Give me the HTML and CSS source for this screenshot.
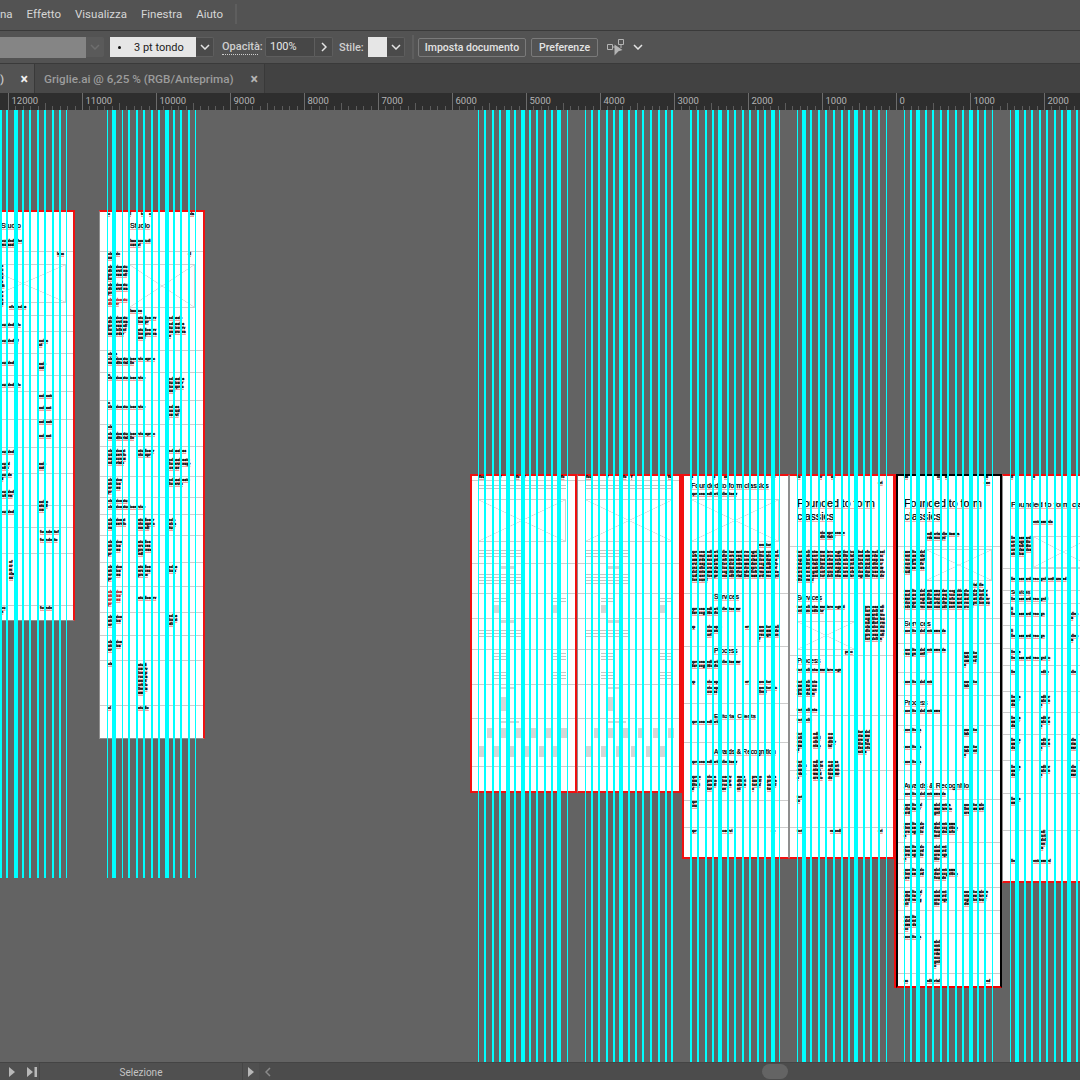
FILE: index.html
```html
<!DOCTYPE html>
<html lang="it">
<head>
    <meta charset="UTF-8">
    <title>Griglie.ai @ 6,25 %</title>
    <link rel="stylesheet" href="styles.css">
</head>
<body>
<div class="menubar">
    <span class="menu-item cut">na</span>
    <span class="menu-item">Effetto</span>
    <span class="menu-item">Visualizza</span>
    <span class="menu-item">Finestra</span>
    <span class="menu-item">Aiuto</span>
    <span class="menu-sep"></span>
</div>
<div class="controlbar">
    <div class="swatch-off"></div>
    <div class="chev-box dim"><svg width="10" height="6" viewBox="0 0 10 6"><path d="M1 1l4 4 4-4" fill="none" stroke="#6e6e6e" stroke-width="1.5"/></svg></div>
    <div class="stroke-field"><i class="dot"></i>3 pt tondo</div>
    <div class="chev-box"><svg width="10" height="6" viewBox="0 0 10 6"><path d="M1 1l4 4 4-4" fill="none" stroke="#e4e4e4" stroke-width="1.5"/></svg></div>
    <span class="lbl dotted">Opacità:</span>
    <div class="num-field">100%</div>
    <div class="chev-box side"><svg width="6" height="10" viewBox="0 0 6 10"><path d="M1 1l4 4-4 4" fill="none" stroke="#e4e4e4" stroke-width="1.5"/></svg></div>
    <span class="lbl stile">Stile:</span>
    <div class="style-swatch"></div>
    <div class="chev-box"><svg width="10" height="6" viewBox="0 0 10 6"><path d="M1 1l4 4 4-4" fill="none" stroke="#e4e4e4" stroke-width="1.5"/></svg></div>
    <span class="bar-sep"></span>
    <button class="btn doc">Imposta documento</button>
    <button class="btn pref">Preferenze</button>
    <svg class="sel-icon" width="18" height="18" viewBox="0 0 18 18">
        <path d="M11.500 1.500h5v5h-5zM.5 6.500h5v5h-5z" fill="none" stroke="#b4b4b4"/>
        <path d="M5.500 9h3M14 6.500V10" stroke="#b4b4b4" fill="none"/>
        <path d="M7.500 6.500l8 5.500-4 1.200-4 4.300z" fill="#b4b4b4"/>
    </svg>
    <svg class="sel-chev" width="10" height="6" viewBox="0 0 10 6"><path d="M1 1l4 4 4-4" fill="none" stroke="#e4e4e4" stroke-width="1.500"/></svg>
</div>
<div class="tabs">
    <div class="tab first"><span>)</span><b>×</b></div>
    <div class="tab"><span>Griglie.ai @ 6,25 % (RGB/Anteprima)</span><b>×</b></div>
</div>
<div class="ruler" id="ruler"></div>
<div class="canvas" id="canvas"></div>
<div class="statusbar">
    <div class="play">
        <svg width="8" height="10" viewBox="0 0 8 10"><path d="M1 0l6 5-6 5z" fill="#b8b8b8"/></svg>
        <svg width="10" height="10" viewBox="0 0 10 10"><path d="M0 0l6 5-6 5zM7.500 0H10v10H7.500z" fill="#b8b8b8"/></svg>
    </div>
    <div class="status-name">Selezione</div>
    <div class="status-arrow"><svg width="8" height="10" viewBox="0 0 8 10"><path d="M1 0l6 5-6 5z" fill="#b8b8b8"/></svg></div>
    <div class="hscroll">
        <svg width="6" height="10" viewBox="0 0 6 10"><path d="M5 1L1 5l4 4" fill="none" stroke="#8a8a8a" stroke-width="1.500"/></svg>
        <div class="thumb"></div>
    </div>
</div>
<script src="app.js"></script>
</body>
</html>
```
FILE: styles.css
```css
*{
    margin: 0;
    padding: 0;
    box-sizing: border-box;
}
html,body{
    width: 1080px;
    height: 1080px;
    overflow: hidden;
}
body{
    display: flex;
    flex-direction: column;
    background: #535353;
    font-family: Roboto, "Noto Sans", sans-serif;
    font-size: 11px;
    color: #e0e0e0;
}

/* top menu */
.menubar{
    display: flex;
    align-items: center;
    flex: 0 0 31px;
    padding-bottom: 3px;
    background: #535353;
    border-bottom: 1px solid #3a3a3a;
    font-size: 11.500px;
    color: #d6d6d6;
    gap: 14px;
}
.menu-sep{
    width: 2px;
    height: 20px;
    margin-left: -2px;
    background: #5e5e5e;
}

/* control bar */
.controlbar{
    display: flex;
    align-items: center;
    flex: 0 0 33px;
    background: #535353;
    border-bottom: 1px solid #3a3a3a;
}
.swatch-off{
    width: 86px;
    height: 21px;
    background: #858585;
}
.chev-box{
    display: flex;
    align-items: center;
    justify-content: center;
    width: 18px;
    height: 20px;
    border: 1px solid #5e5e5e;
    border-left: 0;
    background: #4a4a4a;
    border-radius: 0 2px 2px 0;
}
.chev-box.dim{
    background: #5a5a5a;
    border-color: #5a5a5a;
    margin-right: 6px;
}
.stroke-field{
    display: flex;
    align-items: center;
    width: 86px;
    height: 20px;
    background: #e6e6e6;
    color: #1c1c1c;
}
.dot{
    width: 3px;
    height: 3px;
    margin: 0 13px 0 8px;
    border-radius: 50%;
    background: #111;
}
.lbl{
    flex: none;
    color: #cfcfcf;
    font-weight: 500;
    white-space: nowrap;
}
.dotted{
    width: 36px;
    margin: 0 7px 0 8px;
    border-bottom: 1px dotted #cfcfcf;
    line-height: 14px;
}
.stile{
    width: 22px;
    margin: 0 7px 0 6px;
}
.num-field{
    width: 50px;
    height: 20px;
    padding-left: 4px;
    line-height: 18px;
    background: #474747;
    border: 1px solid #5e5e5e;
    border-radius: 2px 0 0 2px;
    color: #e6e6e6;
}
.style-swatch{
    width: 19px;
    height: 20px;
    background: #e6e6e6;
}
.bar-sep{
    width: 2px;
    height: 24px;
    margin: 0 4px 0 7px;
    background: #5e5e5e;
}
.btn{
    height: 19px;
    background: #535353;
    border: 1px solid #7a7a7a;
    border-radius: 2px;
    font: 500 10.500px Roboto, "Noto Sans", sans-serif;
    color: #e4e4e4;
    white-space: nowrap;
}
.doc{
    width: 108px;
    margin-right: 5px;
}
.pref{
    width: 67px;
}
.sel-icon{
    margin-left: 9px;
}
.sel-chev{
    margin-left: 8px;
}

/* document tabs */
.tabs{
    display: flex;
    flex: 0 0 29px;
    background: #424242;
}
.tab{
    display: flex;
    align-items: center;
    justify-content: space-between;
    width: 230px;
    padding: 0 6px 0 9px;
    background: #484848;
    border-right: 1px solid #393939;
    color: #9c9c9c;
    font-size: 11.700px;
    font-weight: 500;
}
.tab b{
    color: #b4b4b4;
    font-size: 14px;
}
.tab.first{
    width: 35px;
    padding-left: 0;
    background: #535353;
    color: #c8c8c8;
}
.tab.first b{
    color: #f0f0f0;
}

/* ruler */
.ruler{
    display: flex;
    flex: 0 0 17px;
    padding-left: 7.500px;
    overflow: hidden;
    background: #2e2e2e;
}
.tick{
    flex: 0 0 74px;
    height: 17px;
    padding: 0 0 0 3px;
    border-left: 1px solid #6c6c6c;
    font-size: 9.500px;
    line-height: 15px;
    color: #b4b4b4;
    background:
        linear-gradient(#5c5c5c, #5c5c5c) 36px bottom / 1px 7px no-repeat,
        repeating-linear-gradient(90deg, transparent 0, transparent 6.400px, #5c5c5c 6.400px, #5c5c5c 7.400px) left bottom / 100% 4px no-repeat;
}

/* artboard area */
.canvas{
    position: relative;
    flex: 1 1 auto;
    overflow: hidden;
    background: #636363;
}
.board{
    position: absolute;
    background: #fff;
    border: 1px solid #8f8f8f;
}
.board.top-red{
    border-top: 2px solid #f01010;
}
.board.right-red{
    border-right: 2px solid #f01010;
}
.board.bot-red{
    border-bottom: 2px solid #f01010;
}
.board.left-red{
    border-left: 2px solid #f01010;
}
.board.right-thick{
    border-right: 3px solid #f01010;
}
.board.selected{
    border: 2px solid #000;
    border-bottom-color: #e00;
    box-shadow: -2px 0 0 #f01010;
}
.rule{
    position: absolute;
    left: 0;
    right: 0;
    height: 1px;
    background: #cdcdcd;
}
.pic{
    position: absolute;
    border: 1px solid #cfcfcf;
    background:
        linear-gradient(to top right, transparent calc(50% - .6px), #d2d2d2 50%, transparent calc(50% + .6px)),
        linear-gradient(to bottom right, transparent calc(50% - .6px), #d2d2d2 50%, transparent calc(50% + .6px));
}
.tx{
    position: absolute;
    font: 700 3.600px/4px "Liberation Sans", sans-serif;
    color: #000;
    word-break: break-all;
    word-spacing: -1px;
    text-decoration: underline #f0a0a0 .4px;
    -webkit-text-stroke: .3px #000;
}
.tx.red{
    color: #a82020;
    -webkit-text-stroke: .3px #a82020;
}
.hd{
    position: absolute;
    font-family: "Liberation Sans", sans-serif;
    color: #000;
    white-space: nowrap;
    text-decoration: underline #f2b4b4 1px;
    text-underline-offset: 1px;
    -webkit-text-stroke: .25px #000;
}
.grey{
    position: absolute;
    background: #d6d6d6;
}
.lines{
    position: absolute;
    background: repeating-linear-gradient(180deg, #c4c4c4 0, #c4c4c4 1px, #fff 1px, #fff 3px);
}
.guides{
    position: absolute;
    left: 0;
    top: 0;
}

/* bottom status */
.statusbar{
    display: flex;
    align-items: center;
    flex: 0 0 18px;
    background: #505050;
    border-top: 1px solid #444;
}
.play{
    display: flex;
    align-items: center;
    gap: 11px;
    width: 40px;
    height: 100%;
    padding-left: 8px;
    border-right: 1px solid #464646;
}
.status-name{
    width: 202px;
    padding-top: 2px;
    text-align: center;
    color: #c4c4c4;
    font-size: 10px;
}
.status-arrow{
    display: flex;
    align-items: center;
    justify-content: center;
    width: 17px;
    height: 100%;
    border-left: 1px solid #464646;
}
.hscroll{
    position: relative;
    display: flex;
    align-items: center;
    flex: 1;
    height: 100%;
    padding-left: 6px;
    background: #4c4c4c;
}
.thumb{
    position: absolute;
    left: 503px;
    top: 1px;
    width: 26px;
    height: 15px;
    border-radius: 8px;
    background: #646464;
}
```
FILE: app.js
```js
// ruler labels
var labels=['12000','11000','10000','9000','8000','7000','6000','5000','4000','3000','2000','1000','0','1000','2000'];
var oRuler=document.getElementById('ruler');
for (var i=0;i<labels.length;i++) {
    var oTick=document.createElement('div');
    oTick.className='tick';
    oTick.textContent=labels[i];
    oRuler.appendChild(oTick);
}

var TOP=110;
var WORDS='founded to form classics studio services process editorial clients awards recognition ';
var FILL=WORDS+WORDS+WORDS+WORDS+WORDS+WORDS+WORDS+WORDS+WORDS+WORDS;
var oCanvas=document.getElementById('canvas');

function add(parent,cls,x,y,w,h,b) {
    var el=document.createElement('div');
    el.className=cls;
    el.style.left=(x-b.x-parent.clientLeft)+'px';
    el.style.top=(y-b.y-parent.clientTop)+'px';
    if (w) el.style.width=w+'px';
    if (h) el.style.height=h+'px';
    parent.appendChild(el);
    return el;
}

// [x,y,w,h] in page coordinates
var boards=[
    {x:-32,y:210,w:107,h:411,cls:'top-red right-red',
     rules:[251,315,331,353,375,391,419,447,473,505,527,553,605],
     pics:[[-21,264,87,39]],
     heads:[[1,222,7,'Studio']],
     tx:[[1,239,22,8],[57,252,9,4],[1,264,4,16],[1,290,4,8],[9,305,22,4],[1,323,24,4],[39,339,9,8],[1,339,22,4],[1,361,20,4],[39,362,8,8],[1,383,25,4],[39,394,18,4],[39,406,16,4],[39,420,18,4],[39,434,16,4],[1,450,14,4],[1,462,10,8],[39,462,8,8],[1,473,12,4],[1,490,14,8],[39,500,10,12],[1,510,14,4],[40,530,25,4],[40,538,22,4],[9,560,5,24],[1,606,6,4],[40,606,12,4]]},
    {x:99,y:210,w:106,h:529,cls:'top-red right-red',
     rules:[251,350,372,400,424,446,476,497,514,535,562,586,612,635,660,705],
     pics:[[129,264,66,44]],
     heads:[[130,222,7,'Studio']],
     tx:[[108,212,5,4],[130,212,3,4],[141,212,4,4],[149,212,3,4],[189,212,6,4],[130,239,21,8],[188,252,7,4],[108,252,13,8],[108,265,20,16],[108,283,20,12],[108,298,20,8,'red'],[130,309,16,4],[108,316,20,24],[138,316,19,8],[138,328,19,12],[167,316,19,4],[167,322,19,16],[108,352,12,4],[108,357,48,8],[108,373,5,4],[108,376,49,4],[167,377,18,16],[108,401,5,4],[108,405,48,4],[167,405,13,16],[108,425,10,4],[108,432,48,8],[108,449,18,20],[138,449,18,8],[167,449,24,4],[167,458,24,12],[108,478,14,16],[167,478,24,8],[108,499,26,4],[108,505,48,4],[108,518,18,12],[138,518,18,12],[167,518,10,12],[108,540,14,16],[138,540,14,16],[108,565,14,16],[138,565,14,12],[167,565,12,8],[108,590,14,16,'red'],[138,596,22,4],[167,614,12,12],[108,615,14,12],[108,640,14,12],[138,663,10,36],[108,662,10,4],[108,706,6,4],[138,706,12,4]]},
    {x:470,y:474,w:107,h:319,cls:'top-red bot-red left-red right-red',wire:true},
    {x:577,y:474,w:105,h:319,cls:'top-red bot-red right-thick',wire:true},
    {x:682,y:474,w:107,h:385,cls:'top-red bot-red left-red',
     rules:[593,646,703,742,800,827],
     pics:[[691,499,88,43]],
     heads:[[691,482,7,'Founded to form classics'],[714,594,6.5,'Services'],[714,648,6.5,'Process'],[714,713,6,'Editorial Clients'],[714,749,6.3,'Awards & Recognition']],
     tx:[[691,475,5,4],[713,475,3,4],[724,475,4,4],[732,475,3,4],[771,475,6,4],[691,492,60,4],[759,543,20,4],[691,550,88,36],[691,607,50,8],[691,625,6,4],[707,625,15,12],[745,625,6,4],[759,625,20,16],[691,660,50,8],[691,680,6,4],[707,680,15,4],[745,680,6,4],[759,680,20,4],[707,686,14,8],[759,686,18,8],[691,720,40,4],[691,760,60,4],[691,775,10,16],[707,775,10,16],[722,775,10,16],[737,775,10,16],[752,775,10,16],[767,775,10,16],[691,800,8,8],[691,829,8,4],[722,829,14,4],[771,829,6,4]]},
    {x:789,y:474,w:106,h:385,cls:'top-red bot-red right-red',
     rules:[546,593,655,715,770,827],
     pics:[[797,621,58,29]],
     heads:[[797,498,10.6,'Founded to form'],[797,511,10.6,'classics'],[797,595,6.5,'Services'],[797,658,6.5,'Process']],
     tx:[[797,475,5,4],[820,475,3,4],[831,475,4,4],[878,481,7,4],[820,531,26,8],[797,550,88,36],[797,605,48,8],[865,605,20,44],[845,650,10,4],[797,668,58,4],[797,680,21,20],[797,708,30,4],[797,718,22,4],[797,732,8,20],[813,732,8,20],[828,732,8,16],[855,730,16,28],[797,760,10,20],[813,760,10,24],[828,760,12,20],[797,795,8,8],[797,829,8,4],[830,829,14,4],[878,829,6,4]]},
    {x:896,y:474,w:106,h:514,cls:'selected',
     rules:[546,618,643,672,695,725,770,799,842,863,887,910,933,973],
     pics:[[926,549,66,32]],
     heads:[[904,498,10.6,'Founded to form'],[904,511,10.6,'classics'],[904,620,7,'Services'],[904,700,6.5,'Process'],[904,782,7,'Awards & Recognition']],
     tx:[[904,475,6,4],[926,475,3,4],[937,475,4,4],[945,475,3,4],[984,475,6,4],[984,481,8,4],[927,532,33,8],[904,550,21,28],[972,583,18,4],[904,589,86,24],[904,629,56,4],[904,648,42,8],[964,651,14,16],[904,680,42,4],[964,680,14,8],[904,709,50,4],[904,728,22,4],[964,728,14,8],[904,745,22,4],[964,745,14,12],[904,760,22,4],[904,792,54,4],[904,803,18,12],[934,803,18,12],[964,803,20,12],[904,822,20,16],[934,822,24,16],[904,845,20,16],[934,845,14,16],[904,868,20,12],[934,868,24,12],[904,890,18,16],[934,890,14,16],[964,890,24,16],[904,915,16,16],[904,935,22,4],[934,940,8,28],[904,979,6,4],[926,979,20,4],[986,979,6,4]]},
    {x:1002,y:474,w:100,h:409,cls:'top-red bot-red',
     rules:[568,590,603,625,648,665,691,712,734,760,793,830],
     pics:[[1033,536,60,32]],
     heads:[[1011,501,8,'Founded to form classics'],[1011,590,5,'Services']],
     tx:[[1011,475,5,4],[1033,475,3,4],[1033,520,22,4],[1011,536,21,24],[1011,577,69,4],[1011,597,47,4],[1011,607,5,4],[1011,612,40,4],[1070,612,9,8],[1011,629,5,4],[1011,634,40,4],[1070,634,9,8],[1011,650,14,4],[1011,656,48,4],[1011,670,10,4],[1040,670,10,4],[1070,670,8,4],[1011,695,10,12],[1040,695,10,12],[1011,716,10,12],[1040,716,10,12],[1011,738,10,12],[1040,738,10,12],[1070,738,8,12],[1011,765,10,12],[1040,765,10,12],[1070,765,8,12],[1011,797,10,8],[1040,830,6,24],[1011,859,6,4],[1033,859,20,4]]}
];

// letters that fill a block of w x h at the .tx size
function letters(w,h) {
    var perLine=Math.max(1,Math.floor(w/2));
    return perLine*Math.max(1,Math.floor(h/4));
}

for (var n=0;n<boards.length;n++) {
    var b=boards[n];
    var oB=document.createElement('div');
    oB.className='board '+b.cls;
    oB.style.left=b.x+'px';
    oB.style.top=(b.y-TOP)+'px';
    oB.style.width=b.w+'px';
    oB.style.height=b.h+'px';
    oCanvas.appendChild(oB);
    if (b.wire) {
        drawWire(oB,b);
        continue;
    }
    (b.rules||[]).forEach(function (y) {
        add(oB,'rule',b.x,y,0,0,b).style.left='0';
    });
    (b.pics||[]).forEach(function (p) {
        add(oB,'pic',p[0],p[1],p[2],p[3],b);
    });
    (b.heads||[]).forEach(function (h) {
        var el=add(oB,'hd',h[0],h[1],0,0,b);
        el.style.fontSize=h[2]+'px';
        el.style.lineHeight=h[2]+'px';
        el.textContent=h[3];
    });
    (b.tx||[]).forEach(function (t) {
        var el=add(oB,'tx'+(t[4] ? ' '+t[4] : ''),t[0],t[1],t[2],0,b);
        var from=n*7+Math.abs(t[0])%20;
        el.textContent=FILL.slice(from,from+letters(t[2],t[3]));
    });
}

// empty wireframe artboards
function drawWire(oB,b) {
    var dx=b.x-470;
    [480,563,593,618,649,684,718,766].forEach(function (y) {
        add(oB,'rule',b.x,y,0,0,b).style.left='0';
    });
    add(oB,'pic',478+dx,499,88,43,b);
    [[479,475,6,4],[500,475,3,4],[516,475,4,4],[524,475,3,4],[561,475,5,4]].forEach(function (t) {
        var el=add(oB,'tx',t[0]+dx,t[1],t[2],0,b);
        el.textContent=FILL.slice(0,letters(t[2],t[3]));
    });
    var grey=[[494,605,6,8],[553,605,6,8],[501,566,13,3],[501,620,13,3],[501,687,13,2],[501,721,18,2],[501,697,6,14],
        [487,728,5,10],[501,728,6,10],[516,728,6,10],[531,728,6,10],[546,728,6,10],[561,728,6,10],
        [479,746,6,11],[494,746,6,11],[509,746,6,11],[524,746,6,11],[539,746,6,11],[553,746,6,11]];
    grey.forEach(function (g) {
        add(oB,'grey',g[0]+dx,g[1],g[2],g[3],b);
    });
    var lines=[[478,485,88,6],[478,550,43,7],[478,574,43,10],[494,598,12,6],[553,598,13,6],[478,630,43,8],[494,653,12,9],[553,653,13,9],[494,672,12,8],[553,672,13,8]];
    lines.forEach(function (l) {
        add(oB,'lines',l[0]+dx,l[1],l[2],l[3],b);
    });
}

// guides
var thick=[1,7,15,17,23,30,38,45,53,60, 113,115,129,137,144,152,159,166,168,174,181,189,
    485,493,500,507,509,515,522,524,530,537,545,552,558,560,
    592,599,607,614,620,622,629,636,643,651,659,666,672,
    691,698,706,713,719,721,728,735,743,750,758,765,772,774,
    803,805,811,819,826,834,842,849,855,857,864,871,879,
    911,917,919,926,933,941,948,956,963,970,972,978,985,
    1016,1018,1025,1032,1040,1047,1055,1062,1068,1070,1077];
var thin=[66,107,122,195,478,567,585,779,797,886,904,992,1010];

function pathFor(list,w) {
    var d='';
    for (var k=0;k<list.length;k++) {
        var end=list[k]<300 ? 768 : 952;
        d+='M'+(list[k]+(w==1 ? .5 : 0))+' 0V'+end;
    }
    return '<path d="'+d+'" stroke="#00ffff" stroke-width="'+w+'" fill="none"/>';
}
var oSvg=document.createElementNS('http://www.w3.org/2000/svg','svg');
oSvg.setAttribute('class','guides');
oSvg.setAttribute('width','1080');
oSvg.setAttribute('height','952');
oSvg.innerHTML=pathFor(thick,2)+pathFor(thin,1);
oCanvas.appendChild(oSvg);
```
